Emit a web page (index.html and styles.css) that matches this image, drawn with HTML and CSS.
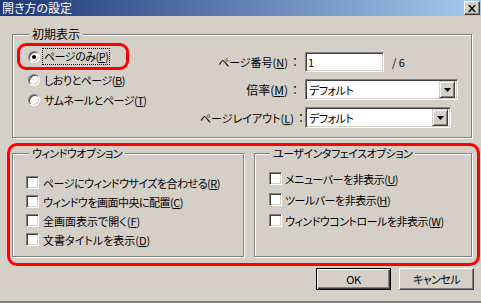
FILE: index.html
```html
<!DOCTYPE html>
<html lang="ja">
<head>
<meta charset="utf-8">
<title>開き方の設定</title>
<link rel="stylesheet" href="styles.css">
</head>
<body>
<div class="window">
  <div class="titlebar">
    <span class="title">開き方の設定</span>
    <span class="close-btn"><svg width="8" height="7" viewBox="0 0 8 7"><path d="M0 0h2l2 2.5 2-2.5h2l-3 3.5 3 3.5h-2l-2-2.5-2 2.5h-2l3-3.5z" fill="#000"/></svg></span>
  </div>

  <div class="group group-initial">
    <span class="legend kanji">初期表示</span>
    <div class="radios">
      <div class="radio-row marked"><span class="radio checked"></span><span class="radio-label focus">ページのみ(<u>P</u>)</span></div>
      <div class="radio-row"><span class="radio"></span><span class="radio-label">しおりとページ(<u>B</u>)</span></div>
      <div class="radio-row"><span class="radio"></span><span class="radio-label">サムネールとページ(<u>T</u>)</span></div>
    </div>
    <div class="fields">
      <span class="field-label">ページ番号(<u>N</u>)<span class="colon">：</span></span>
      <div class="field-ctl"><span class="textbox">1</span><span class="of">/ 6</span></div>
      <span class="field-label kanji">倍率(<u>M</u>)<span class="colon">：</span></span>
      <div class="field-ctl"><span class="combo combo-wide"><span class="combo-text">デフォルト</span><span class="combo-btn"><svg width="7" height="4" viewBox="0 0 7 4"><path d="M0 0h7L3.5 4z" fill="#000"/></svg></span></span></div>
      <span class="field-label">ページレイアウト(<u>L</u>)<span class="colon">：</span></span>
      <div class="field-ctl"><span class="combo combo-narrow"><span class="combo-text">デフォルト</span><span class="combo-btn"><svg width="7" height="4" viewBox="0 0 7 4"><path d="M0 0h7L3.5 4z" fill="#000"/></svg></span></span></div>
    </div>
  </div>

  <div class="annot">
    <div class="group group-window">
      <span class="legend">ウィンドウオプション</span>
      <div class="check-row"><span class="cb"></span><span class="check-text">ページにウィンドウサイズを合わせる(<u>R</u>)</span></div>
      <div class="check-row"><span class="cb"></span><span class="check-text">ウィンドウを画面中央に配置(<u>C</u>)</span></div>
      <div class="check-row"><span class="cb"></span><span class="check-text kanji-ish">全画面表示で開く(<u>F</u>)</span></div>
      <div class="check-row"><span class="cb"></span><span class="check-text kanji-ish">文書タイトルを表示(<u>D</u>)</span></div>
    </div>
    <div class="group group-ui">
      <span class="legend">ユーザインタフェイスオプション</span>
      <div class="check-row"><span class="cb"></span><span class="check-text">メニューバーを非表示(<u>U</u>)</span></div>
      <div class="check-row"><span class="cb"></span><span class="check-text">ツールバーを非表示(<u>H</u>)</span></div>
      <div class="check-row"><span class="cb"></span><span class="check-text">ウィンドウコントロールを非表示(<u>W</u>)</span></div>
    </div>
  </div>

  <div class="buttons">
    <span class="btn btn-default">OK</span>
    <span class="btn">キャンセル</span>
  </div>
</div>
</body>
</html>
```

FILE: styles.css
```css
html, body {
  margin: 0;
  padding: 0;
}

.window {
  width: 481px;
  height: 303px;
  box-sizing: border-box;
  background: #d4d0c8;
  border-bottom: 2px solid #808080;
  font-family: "Noto Sans CJK JP", "Noto Sans", sans-serif;
  font-feature-settings: "palt";
  font-size: 11px;
  letter-spacing: -0.5px;
  line-height: 14px;
  color: #000;
  overflow: hidden;
}

.kanji {
  font-size: 12px;
  letter-spacing: 0;
}

.kanji-ish {
  letter-spacing: 0;
}

.titlebar {
  height: 16px;
  display: flex;
  align-items: center;
  justify-content: space-between;
  padding: 0 1px 0 2px;
  background: linear-gradient(to right, #1d3575, #a6caf0);
  color: #fff;
}

.title {
  font-size: 12px;
  letter-spacing: 0;
  line-height: 16px;
}

.close-btn {
  width: 16px;
  height: 14px;
  box-sizing: border-box;
  display: flex;
  align-items: center;
  justify-content: center;
  background: #d4d0c8;
  border: 1px solid;
  border-color: #fff #404040 #404040 #fff;
  box-shadow: inset -1px -1px #808080;
}

.group {
  position: relative;
  box-sizing: border-box;
  border: 1px solid #808080;
  box-shadow: inset 1px 1px #fff, 1px 1px #fff;
}

.legend {
  position: absolute;
  top: -8px;
  left: 16px;
  padding: 0 3px;
  background: #d4d0c8;
  line-height: 14px;
  white-space: nowrap;
}

.group-initial {
  margin: 18px 0 0 12px;
  width: 460px;
  height: 104px;
  display: flex;
}

.radios {
  width: 187px;
  flex: none;
  box-sizing: border-box;
  padding-top: 8px;
  display: flex;
  flex-direction: column;
}

.radio-row {
  display: flex;
  align-items: center;
  height: 20px;
  padding-left: 15px;
  box-sizing: border-box;
  white-space: nowrap;
}

.radio-row.marked {
  margin-left: 4px;
  width: 112px;
  height: 27px;
  border: 3px solid #ff0000;
  border-radius: 9px;
  padding-left: 8px;
}

.radio {
  width: 12px;
  height: 12px;
  flex: none;
  box-sizing: border-box;
  border-radius: 50%;
  background: #fff;
  border: 1px solid;
  border-color: #808080 #fff #fff #808080;
  box-shadow: inset 1px 1px #404040, inset -1px -1px #d4d0c8;
  display: flex;
  align-items: center;
  justify-content: center;
}

.radio.checked::after {
  content: "";
  width: 4px;
  height: 4px;
  border-radius: 50%;
  background: #000;
}

.radio-label {
  margin-left: 3px;
  padding: 0 1px;
  line-height: 15px;
}

.radio-label.focus {
  outline: 1px dotted #000;
}

.fields {
  display: grid;
  grid-template-columns: 102px auto;
  column-gap: 3px;
  row-gap: 7px;
  align-items: center;
  align-content: start;
  padding-top: 17px;
}

.field-label {
  text-align: right;
  white-space: nowrap;
  letter-spacing: 0;
}

.colon {
  display: inline-block;
  width: 14px;
  text-align: center;
  font-size: 12px;
}

.field-ctl {
  display: flex;
  align-items: center;
}

.textbox,
.combo {
  box-sizing: border-box;
  background: #fff;
  border: 1px solid;
  border-color: #808080 #fff #fff #808080;
  box-shadow: inset 1px 1px #404040, inset -1px -1px #d4d0c8;
  padding-left: 2px;
  display: flex;
  align-items: center;
}

.textbox {
  width: 79px;
  height: 20px;
}

.of {
  margin-left: 8px;
  letter-spacing: 0;
}

.combo {
  height: 21px;
  padding: 2px;
  justify-content: space-between;
}

.combo-wide {
  width: 153px;
}

.combo-narrow {
  width: 146px;
}

.combo-text {
  padding-left: 1px;
}

.combo-btn {
  width: 16px;
  height: 17px;
  box-sizing: border-box;
  background: #d4d0c8;
  border: 1px solid;
  border-color: #d4d0c8 #404040 #404040 #d4d0c8;
  box-shadow: inset 1px 1px #fff, inset -1px -1px #808080;
  display: flex;
  align-items: center;
  justify-content: center;
}

.annot {
  margin: 5px 0 0 7px;
  width: 473px;
  height: 123px;
  box-sizing: border-box;
  border: 3px solid #ff0000;
  border-radius: 10px;
  padding: 7px 0 0 2px;
  display: flex;
  gap: 10px;
}

.group-window {
  width: 232px;
  height: 104px;
  padding: 19px 0 0 13px;
}

.group-ui {
  width: 218px;
  height: 104px;
  padding: 14px 0 0 14px;
}

.group-ui .legend {
  left: 15px;
}

.check-row {
  display: flex;
  align-items: center;
  height: 19px;
  white-space: nowrap;
}

.group-ui .check-row {
  height: 21px;
}

.cb {
  width: 13px;
  height: 13px;
  flex: none;
  box-sizing: border-box;
  background: #fff;
  border: 1px solid;
  border-color: #808080 #fff #fff #808080;
  box-shadow: inset 1px 1px #404040, inset -1px -1px #d4d0c8;
}

.check-text {
  margin-left: 4px;
}

.group-ui .check-text {
  margin-left: 3px;
}

.buttons {
  display: flex;
  justify-content: flex-end;
  gap: 8px;
  margin-top: 2px;
  padding-right: 7px;
}

.btn {
  width: 75px;
  height: 22px;
  box-sizing: border-box;
  display: flex;
  align-items: center;
  justify-content: center;
  background: #d4d0c8;
  border: 1px solid;
  border-color: #fff #404040 #404040 #fff;
  box-shadow: inset -1px -1px #808080;
}

.btn-default {
  border-color: #000;
  box-shadow: inset 1px 1px #fff, inset -1px -1px #404040, inset -2px -2px #808080;
}
```
